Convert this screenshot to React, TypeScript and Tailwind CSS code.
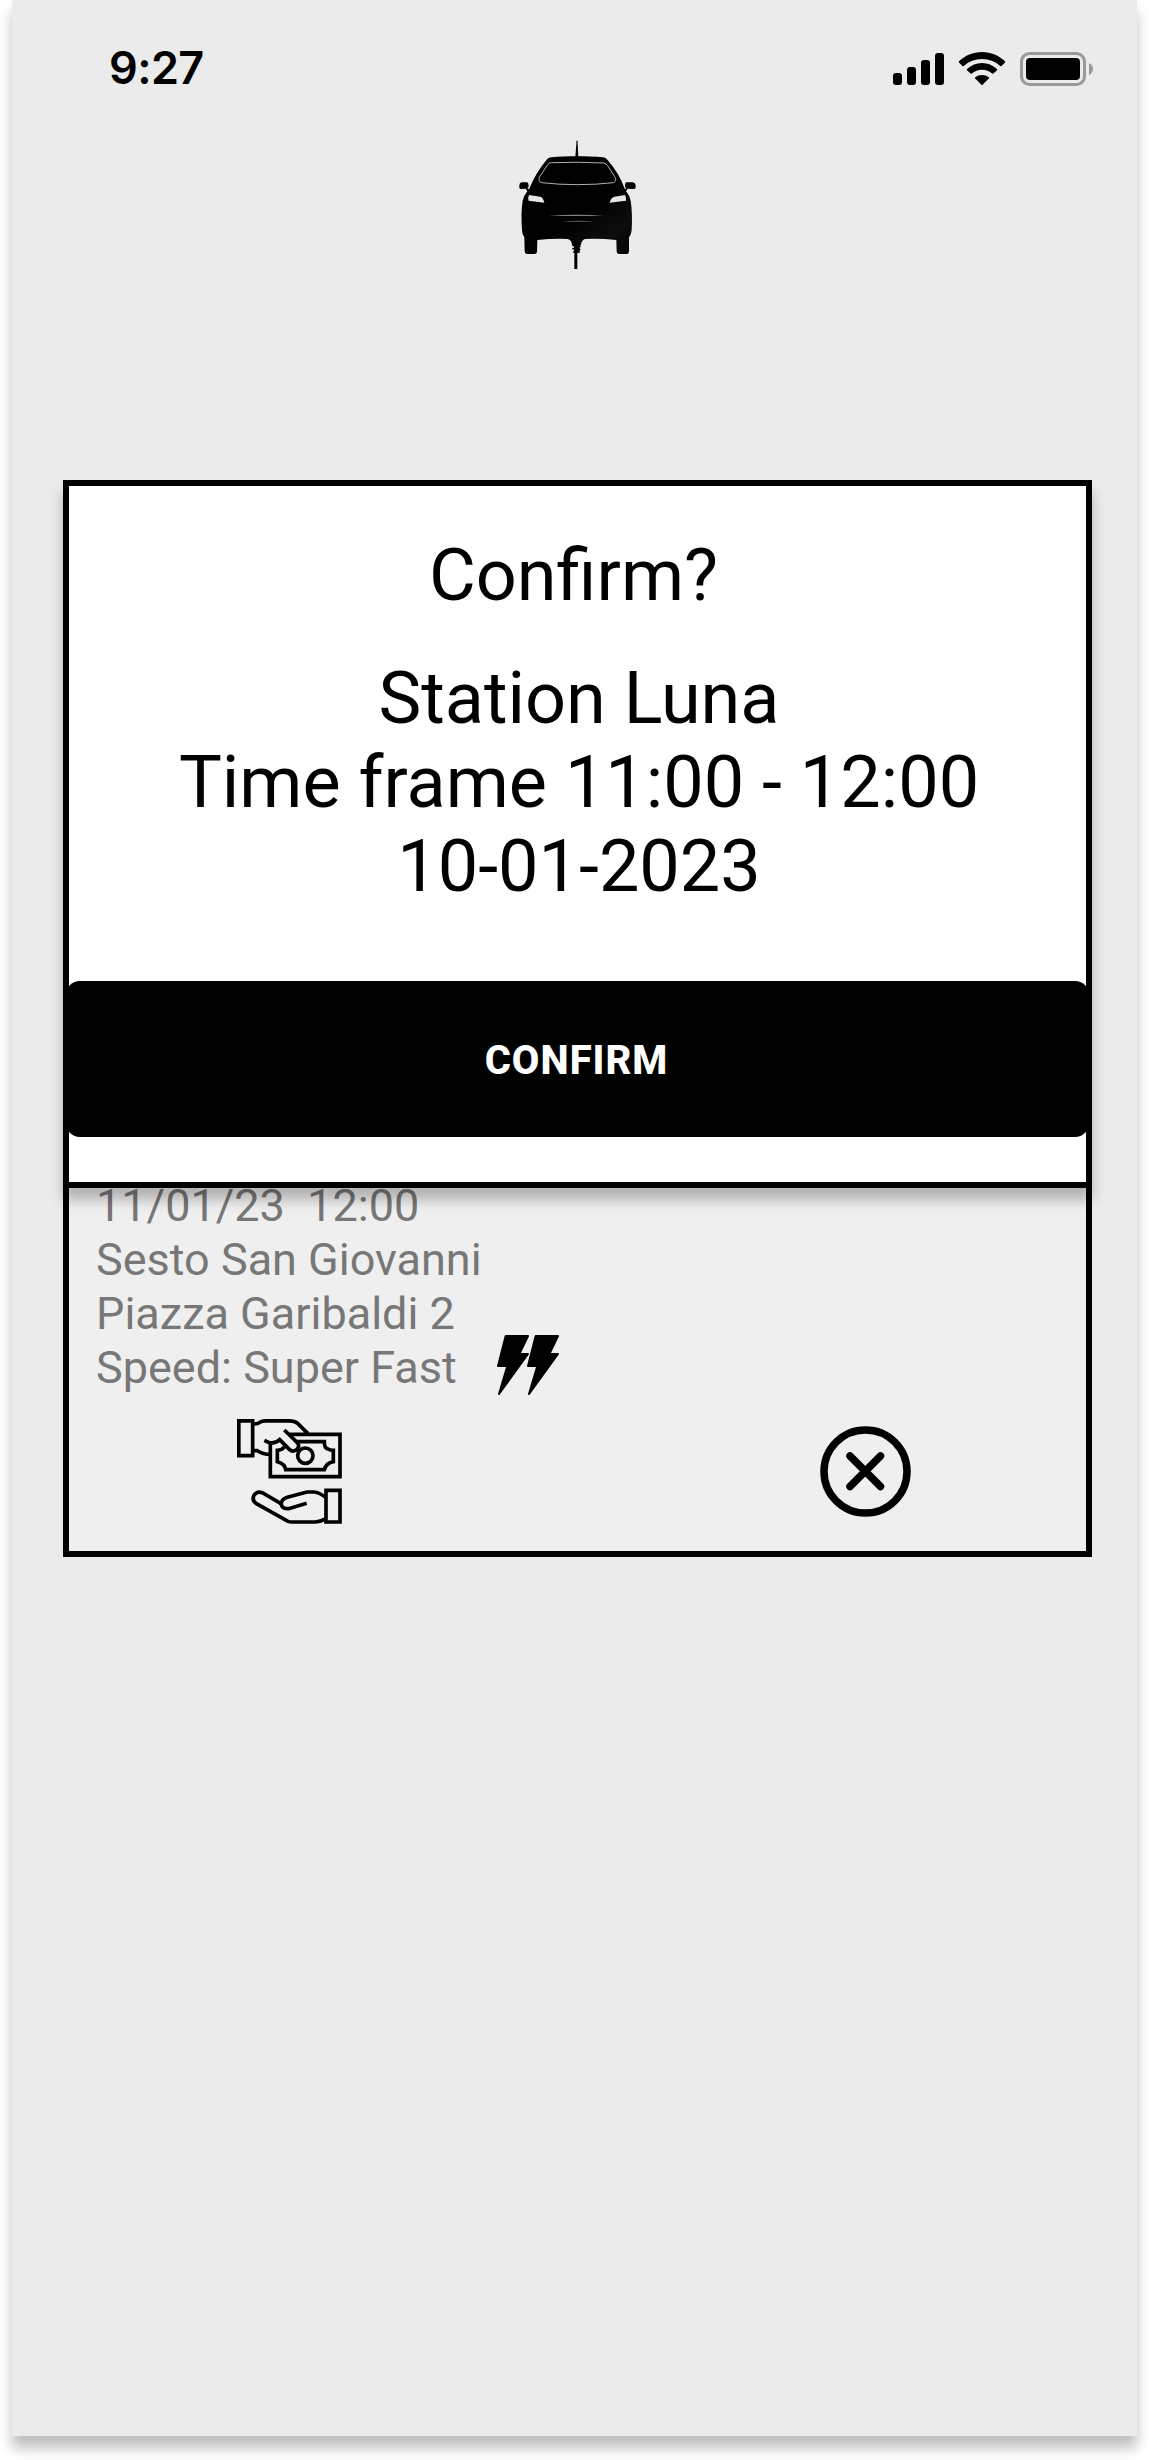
import React from "react";

function CarLogo() {
  return (
    <svg width="118" height="130" viewBox="0 0 354 390" className="block">
      <defs>
        <linearGradient id="body" x1="0" y1="0" x2="1" y2="1">
          <stop offset="0.55" stopColor="#000" />
          <stop offset="0.8" stopColor="#0d0d0d" />
          <stop offset="1" stopColor="#000" />
        </linearGradient>
      </defs>
      <g transform="translate(-86 -30)">
        <path d="M258.500 34 C259 31 261 31 261.500 34 L264 82 L255 82 Z" />
        <path
          fill="url(#body)"
          d="M182 82 C230 78 290 78 338 82 Q347 83 351 89 Q386 128 404 178 L408 175 L404 171 Q403 160 407 157 L428 157 Q435 158 436 166 L436 173 Q434 178 426 177 L412 176 L407 184 Q418 196 421 212 Q427 250 424 300 Q422 316 416 322 L416 366 Q415 372 409 372 L386 372 Q379 371 379 365 L378 330 Q330 325 284 327 Q273 331 272 345 L245 345 Q244 330 232 327 Q190 325 141 330 L140 365 Q139 372 132 372 L109 372 Q103 371 103 364 L102 322 Q95 314 95 300 Q91 250 97 212 Q101 196 111 184 L106 176 L93 177 Q87 177 87 173 L87 166 Q87 158 94 157 L110 157 Q115 159 115 170 L111 175 L116 178 Q136 128 169 89 Q173 83 182 82 Z"
        />
        <path
          fill="none"
          stroke="#d4d4d4"
          strokeWidth="2.5"
          d="M184 98 Q260 95 340 99 Q348 101 352 107 L373 140 Q381 152 369 158 Q320 164 260 164 Q205 164 154 158 Q142 154 148 140 L172 104 Q177 98 184 98 Z"
        />
        <path fill="#e6e6e6" d="M116 195 L150 200 Q158 201 162 218 L115 212 Q112 203 116 195 Z M404 195 L372 200 Q362 202 358 218 L407 212 Q408 203 404 195 Z" />
        <path fill="#aaa" d="M175 256 Q260 253 341 256 Q260 259 175 256 Z" />
        <path fill="#666" d="M215 274 Q260 271 314 274 Q260 277 215 274 Z" />
        <path d="M251 335 H268 V368 H251 Z M252 365 H261 V417 H252 Z" />
        <path fill="none" stroke="#000" strokeWidth="5" strokeLinecap="round" d="M248 346 L269 349 M248 356 L268 358 M250 366 L265 366" />
      </g>
    </svg>
  );
}

function StatusBar() {
  return (
    <header className="flex h-[98px] shrink-0 items-start justify-between pl-[97px] pr-[43px]">
      <span className="mt-[41px] font-['Inter'] text-[45px] leading-[54px] font-[560] tracking-[-0.6px]">9:27</span>
      <svg width="201" height="36" viewBox="0 0 201 36" className="mt-[51px] block">
        <rect x="0" y="22" width="9" height="12" rx="3" />
        <rect x="14" y="16" width="9" height="18" rx="3" />
        <rect x="28" y="9" width="9" height="25" rx="3" />
        <rect x="42" y="2" width="9" height="32" rx="3" />
        <path d="M89 1C98 1 106 4.500 112 10.300Q112.500 11 112 11.600L108.500 15Q108 15.500 107.300 15Q99.500 8 89 8Q78.500 8 70.700 15Q70 15.500 69.500 15L66 11.600Q65.500 11 66 10.300C72 4.500 80 1 89 1Z" />
        <path d="M89 12Q97.500 12 104 18Q104.500 18.600 104 19.200L100.400 22.600Q99.800 23 99.200 22.600Q95 18.800 89 18.800Q83 18.800 78.800 22.600Q78.200 23 77.600 22.600L74 19.200Q73.500 18.600 74 18Q80.500 12 89 12Z" />
        <path d="M89 24Q93 24 95.800 26.300Q96.300 27 95.800 27.600L89.600 33.700Q89 34.200 88.400 33.700L82.200 27.600Q81.700 27 82.200 26.300Q85 24 89 24Z" />
        <rect x="128.500" y="2.500" width="63" height="31" rx="8" fill="none" stroke="#999" strokeWidth="3" />
        <rect x="133" y="7" width="54" height="22" rx="4" />
        <path fill="#999" d="M196 12 Q200 14 200 18 Q200 22 196 24 Z" />
      </svg>
    </header>
  );
}

function BoltPair() {
  return (
    <svg width="62" height="60" viewBox="0 0 186 180" className="block">
      <g stroke="#000" strokeWidth="6" strokeLinejoin="round">
        <path d="M26 3 H93 L67 57 H93 L6 177 L31 93 H3 Z" />
        <path d="M116 3 H183 L157 57 H183 L96 177 L121 93 H93 Z" />
      </g>
    </svg>
  );
}

function PaymentIcon() {
  return (
    <svg width="105" height="105" viewBox="0 0 315 315" fill="none" stroke="#000" strokeWidth="11" className="block">
      <path d="M5.500 5.500 H47 V110 H5.500 Z" />
      <path d="M50 15 Q62 15 72 8 Q78 5.500 86 5.500 H157 Q172 5.500 182 13 L213 44" />
      <path d="M50 95 H61 Q78 106 100 106" />
      <path d="M157 46 H309 V173 H100 V70" />
      <path d="M82 64 L94 70 Q114 76 128 62 L157 91 Q166 100 177 93 Q190 85 182 72 L142 33" />
      <path d="M175 68 H262 Q262 86 271 89 Q277 94 289 94 V128 Q268 132 262 152 H146 Q144 134 121 128 V94 Q134 94 144 82" />
      <circle cx="205" cy="110" r="23" />
      <path d="M267 214 H309 V309 H267 Z" />
      <path d="M265 234 Q245 220 232 219 H210 L151 235 Q130 242 133 258 Q137 270 155 269 L209 253" />
      <path d="M132 254 L76 221 Q60 215 51 229 Q44 244 57 253 L153 307 Q158 309 164 309 H235 Q249 308 265 300" />
    </svg>
  );
}

function CloseIcon() {
  return (
    <svg width="92" height="92" viewBox="0 0 92 92" fill="none" stroke="#000" className="block">
      <circle cx="45.500" cy="45.500" r="41.500" strokeWidth="7.500" />
      <path d="M30 30 L60.500 60.500 M60.500 30 L30 60.500" strokeWidth="7.500" strokeLinecap="round" />
    </svg>
  );
}

function ConfirmDialog() {
  return (
    <section className="relative flex h-[708px] shrink-0 flex-col border-6 border-black bg-white text-center shadow-[0_12px_12px_rgba(0,0,0,0.25)]">
      <h1 className="mt-[48px] pr-[8px] text-[72px] leading-[84px]">Confirm?</h1>
      <p className="mt-[39px] pl-[3px] text-[72px] leading-[84px]">
        Station Luna
        <br />
        Time frame 11:00 - 12:00
        <br />
        10-01-2023
      </p>
      <button className="-mx-[3px] mt-[72px] h-[156px] shrink-0 rounded-[14px] bg-black pt-[4px] pr-[2px] text-[40px] font-extrabold tracking-[1px] text-white">
        CONFIRM
      </button>
    </section>
  );
}

function BookingCard() {
  return (
    <section className="flex h-[369px] shrink-0 flex-col border-6 border-t-0 border-black bg-[#efefef]">
      <div className="flex h-[212px] items-start pl-[27px]">
        <p className="-mt-[9px] w-[385px] whitespace-pre text-[45px] leading-[54px] text-[#777]">
          {"11/01/23  12:00\nSesto San Giovanni\nPiazza Garibaldi 2\nSpeed: Super Fast"}
        </p>
        <div className="mt-[147px] ml-[16px]">
          <BoltPair />
        </div>
      </div>
      <div className="flex items-start justify-between pl-[168px] pr-[174px]">
        <div className="mt-[19px]">
          <PaymentIcon />
        </div>
        <div className="mt-[26px]">
          <CloseIcon />
        </div>
      </div>
    </section>
  );
}

export default function App() {
  return (
    <div className="h-[2460px] overflow-hidden bg-white px-3 font-['Roboto',sans-serif] text-black">
      <main className="flex h-[2436px] flex-col bg-[#ebebeb] shadow-[0_12px_12px_rgba(0,0,0,0.25)]">
        <StatusBar />
        <div className="flex h-[382px] shrink-0 justify-center pt-[42px] pl-[6px]">
          <CarLogo />
        </div>
        <div className="flex flex-col pr-[45px] pl-[51px]">
          <ConfirmDialog />
          <BookingCard />
        </div>
      </main>
    </div>
  );
}
